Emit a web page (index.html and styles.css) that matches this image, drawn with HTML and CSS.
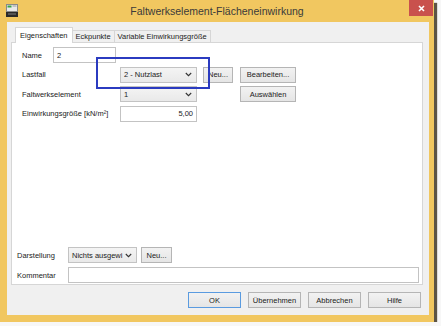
FILE: index.html
```html
<!DOCTYPE html>
<html lang="de">
<head>
  <meta charset="UTF-8">
  <title>Faltwerkselement-Flächeneinwirkung</title>
  <link rel="stylesheet" href="styles.css">
</head>
<body>
  <div class="window">
    <div class="titlebar">
      <svg class="app-icon" width="12" height="13" viewBox="0 0 12 13">
        <rect x="0.5" y="0.5" width="11" height="7" fill="#e9e9e9" stroke="#8a8a8a"/>
        <rect x="1.5" y="1.5" width="4" height="2" fill="#3aa346"/>
        <rect x="6.5" y="1.5" width="4" height="1" fill="#9a9a9a"/>
        <rect x="0" y="8" width="12" height="5" fill="#2a2a2a"/>
        <rect x="2" y="9.5" width="8" height="1" fill="#7d7d7d"/>
      </svg>
      <div class="title">Faltwerkselement-Flächeneinwirkung</div>
      <div class="close">
        <svg width="7" height="7" viewBox="0 0 7 7">
          <path d="M1 1 L6 6 M6 1 L1 6" stroke="#fff" stroke-width="1.6"/>
        </svg>
      </div>
    </div>

    <div class="client">
      <div class="tabs">
        <div class="tab active">Eigenschaften</div>
        <div class="tab">Eckpunkte</div>
        <div class="tab">Variable Einwirkungsgröße</div>
      </div>

      <div class="panel">
        <div class="fields">
          <div class="row">
            <span class="label label-name">Name</span>
            <div class="input input-name">2</div>
          </div>
          <div class="row">
            <span class="label">Lastfall</span>
            <div class="select select-main">
              <span>2 - Nutzlast</span>
              <svg width="7" height="5" viewBox="0 0 7 5"><path d="M0.8 1 L3.5 3.7 L6.2 1" fill="none" stroke="#333" stroke-width="1.1"/></svg>
            </div>
            <div class="btn btn-small btn-neu">Neu...</div>
            <div class="btn btn-wide">Bearbeiten...</div>
          </div>
          <div class="row">
            <span class="label">Faltwerkselement</span>
            <div class="select select-main">
              <span>1</span>
              <svg width="7" height="5" viewBox="0 0 7 5"><path d="M0.8 1 L3.5 3.7 L6.2 1" fill="none" stroke="#333" stroke-width="1.1"/></svg>
            </div>
            <div class="btn btn-wide btn-pick">Auswählen</div>
          </div>
          <div class="row">
            <span class="label">Einwirkungsgröße [kN/m²]</span>
            <div class="input input-value">5,00</div>
          </div>
        </div>

        <div class="extra">
          <div class="row">
            <span class="label label-extra">Darstellung</span>
            <div class="select select-style">
              <span>Nichts ausgewi</span>
              <svg width="7" height="5" viewBox="0 0 7 5"><path d="M0.8 1 L3.5 3.7 L6.2 1" fill="none" stroke="#333" stroke-width="1.1"/></svg>
            </div>
            <div class="btn btn-small">Neu...</div>
          </div>
          <div class="row">
            <span class="label label-extra">Kommentar</span>
            <div class="input input-comment"></div>
          </div>
        </div>
      </div>

      <div class="actions">
        <div class="btn btn-action default">OK</div>
        <div class="btn btn-action">Übernehmen</div>
        <div class="btn btn-action">Abbrechen</div>
        <div class="btn btn-action">Hilfe</div>
      </div>
    </div>

    <!-- Markierung -->
    <div class="mark"></div>
  </div>
</body>
</html>
```

FILE: styles.css
```css
body {
  margin: 0;
  background: #f7f7f7;
  font-family: "Liberation Sans", Arial, sans-serif;
}

.window {
  position: relative;
  width: 434px;
  height: 322px;
  background: #f1c760;
  display: flex;
  flex-direction: column;
  box-shadow: 3px 3px 1px rgba(40, 30, 10, 0.75);
}

.titlebar {
  height: 22px;
  display: grid;
  grid-template-columns: 1fr auto 1fr;
  align-items: center;
}

.app-icon {
  margin-left: 6px;
  margin-top: -1px;
}

.title {
  font-size: 10.5px;
  color: #3a3a3a;
}

.close {
  justify-self: end;
  align-self: start;
  width: 24px;
  height: 16px;
  margin-right: 1px;
  background: #c9514d;
  display: flex;
  align-items: center;
  justify-content: center;
}

.client {
  flex: 1;
  margin: 0 5px 7px 7px;
  padding: 5px 6px 0 4px;
  background: #f0f0f0;
  display: flex;
  flex-direction: column;
  font-size: 7.5px;
  color: #222;
}

.tabs {
  display: flex;
  align-items: flex-end;
  height: 15px;
  margin-left: 4px;
  position: relative;
  z-index: 1;
}

.tab {
  height: 12px;
  padding: 0 3px;
  display: flex;
  align-items: center;
  background: #f0f0f0;
  border: 1px solid #d6d6d6;
  border-bottom: none;
  box-sizing: border-box;
}

.tab + .tab {
  border-left: none;
}

.tab.active {
  height: 16px;
  margin-bottom: -1px;
  padding: 0 4px 1px 4px;
  background: #fff;
}

.panel {
  flex: 1;
  background: #fff;
  border: 1px solid #d6d6d6;
  padding: 4px 3px 1px 5px;
  display: flex;
  flex-direction: column;
}

.fields {
  padding-left: 5px;
  display: flex;
  flex-direction: column;
  gap: 3.5px;
}

.extra {
  margin-top: auto;
  display: flex;
  flex-direction: column;
  gap: 4px;
}

.row {
  display: flex;
  align-items: center;
  height: 16px;
}

.label {
  width: 98px;
  flex-shrink: 0;
}

.label-name {
  width: 31px;
}

.label-extra {
  width: 51px;
}

.input {
  height: 16px;
  box-sizing: border-box;
  border: 1px solid #c3c3c3;
  background: #fff;
  padding: 0 3px;
  display: flex;
  align-items: center;
}

.input-name {
  width: 63px;
}

.input-value {
  width: 77px;
  justify-content: flex-end;
}

.input-comment {
  flex: 1;
}

.select {
  height: 16px;
  box-sizing: border-box;
  border: 1px solid #c3c3c3;
  background: linear-gradient(#f4f4f4, #e9e9e9);
  padding: 0 4px 0 3px;
  display: flex;
  align-items: center;
  justify-content: space-between;
}

.select-main {
  width: 77px;
}

.select-style {
  width: 69px;
}

.btn {
  height: 16px;
  box-sizing: border-box;
  border: 1px solid #b5b5b5;
  background: linear-gradient(#f2f2f2, #e5e5e5);
  display: flex;
  align-items: center;
  justify-content: center;
}

.btn-small {
  width: 31px;
  margin-left: 4px;
}

.btn-neu {
  width: 30px;
  margin-left: 6px;
}

.btn-wide {
  width: 56px;
  margin-left: 7px;
}

.btn-pick {
  margin-left: 43px;
}

.actions {
  display: flex;
  justify-content: flex-end;
  gap: 7px;
  padding: 7px 2px 7px 0;
}

.btn-action {
  width: 53px;
}

.btn-action.default {
  border-color: #5a9be0;
}

.mark {
  position: absolute;
  left: 96px;
  top: 57px;
  width: 114px;
  height: 32px;
  box-sizing: border-box;
  border: 2px solid #2b3bc0;
}
```
